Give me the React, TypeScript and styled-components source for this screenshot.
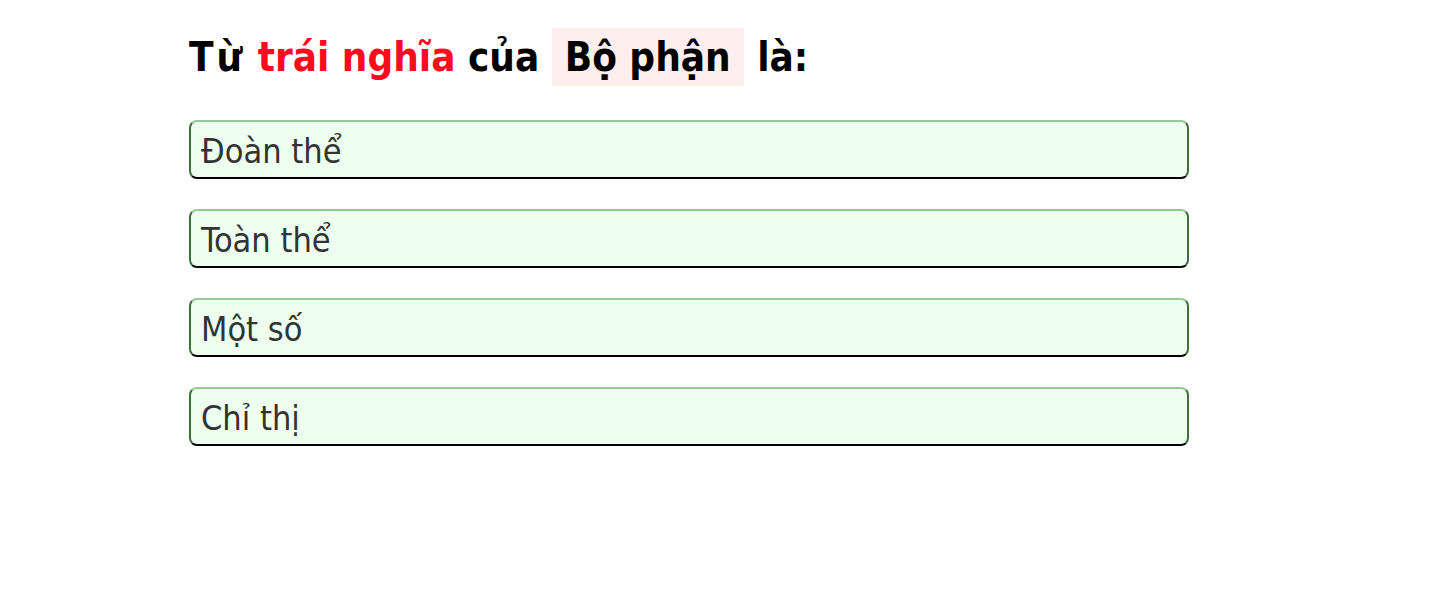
import styled, { createGlobalStyle } from "styled-components";

const GlobalStyle = createGlobalStyle`
  html, body {
    margin: 0;
    padding: 0;
    background: #ffffff;
  }
  body {
    font-family: "DejaVu Sans Condensed", "DejaVu Sans", Verdana, sans-serif;
  }
`;

const Page = styled.div`
  padding: 28px 0 0 189px;
`;

const Quiz = styled.div`
  width: 1000px;
  display: flex;
  flex-direction: column;
`;

const Question = styled.h1`
  margin: 0 0 34px 0;
  font-size: 40px;
  font-weight: 700;
  line-height: 58px;
  color: #000;
  white-space: nowrap;
`;

const Lead = styled.span`
  letter-spacing: 3px;
`;

const Accent = styled.span`
  color: #ff0a1e;
`;

const Keyword = styled.span`
  display: inline-block;
  background: #ffeeee;
  padding: 0 13px;
  margin: 0 1px 0 0;
`;

const Options = styled.div`
  display: flex;
  flex-direction: column;
  gap: 30px;
`;

const Option = styled.div`
  box-sizing: border-box;
  height: 59px;
  display: flex;
  align-items: center;
  padding: 3px 10px 0;
  background: #efffef;
  border: 2px solid;
  border-color: #95c995 #3e6e3e #000000 #3e6e3e;
  border-radius: 8px;
  font-size: 34px;
  color: #333333;
  cursor: pointer;
`;

const options = ["Đoàn thể", "Toàn thể", "Một số", "Chỉ thị"];

export default function App() {
  return (
    <>
      <GlobalStyle />
      <Page>
        <Quiz>
          <Question>
            <Lead>Từ</Lead> <Accent>trái nghĩa</Accent> của{" "}
            <Keyword>Bộ phận</Keyword> là:
          </Question>
          <Options>
            {options.map((text) => (
              <Option key={text}>{text}</Option>
            ))}
          </Options>
        </Quiz>
      </Page>
    </>
  );
}
